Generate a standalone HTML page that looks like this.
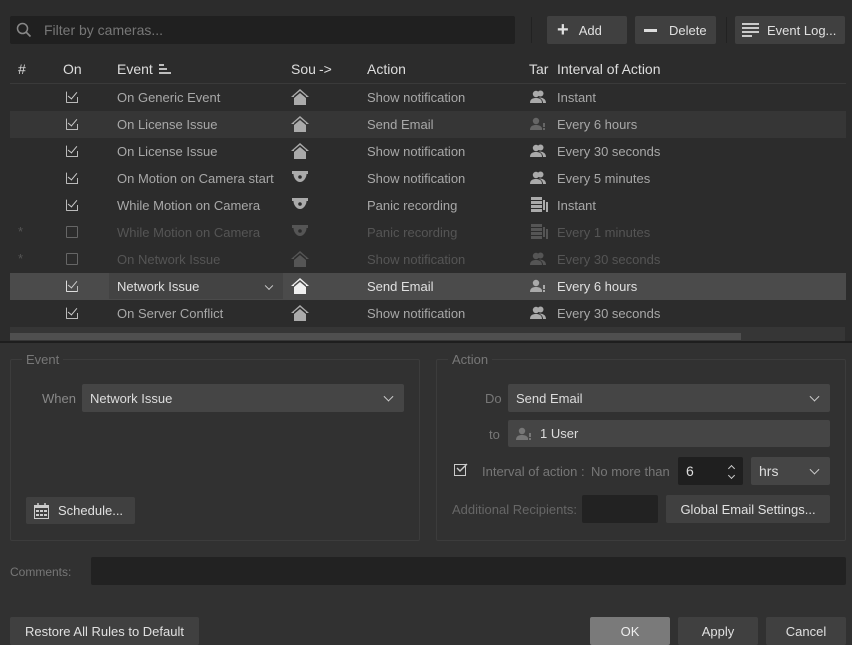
<!DOCTYPE html>
<html><head><style>
*{box-sizing:border-box;margin:0;padding:0}
body{width:852px;height:645px;background:#2c2c2c;font-family:"Liberation Sans",sans-serif;font-size:13px;color:#a8a8a8;position:relative;overflow:hidden}
.a{position:absolute}
.btn{position:absolute;background:#404040;border-radius:2px;color:#e0e0e0;display:flex;align-items:center;justify-content:center;font-size:13px}
.row{position:absolute;left:10px;width:836px;height:27px}
.row span{position:absolute;top:6px;white-space:nowrap}
.cb{position:absolute;left:56px;top:7px;width:12px;height:12px;border:1.3px solid #bbb;border-radius:1px}
.k::after{content:"";position:absolute;left:3px;top:-2px;width:4px;height:8px;border-right:1.6px solid #ccc;border-bottom:1.6px solid #ccc;transform:rotate(40deg);background:transparent}
.k{border-right-color:transparent;border-top-color:transparent}
.k::before{content:"";position:absolute;right:-1.3px;bottom:-1.3px;width:1.3px;height:6px;background:#bbb}
.dim{color:#555}
.hdr{position:absolute;top:61px;color:#ddd;font-size:14px}
.ico{position:absolute;top:5px}
.field{position:absolute;background:#454545;border-radius:2px;color:#ddd;padding-left:8px;display:flex;align-items:center}
.chev{position:absolute;right:12px;top:50%;width:7px;height:7px;border-right:1.3px solid #ccc;border-bottom:1.3px solid #ccc;transform:translateY(-70%) rotate(45deg)}
</style></head><body>
<div class="a" style="left:10px;top:16px;width:505px;height:28px;background:#202020;border-radius:2px"></div>
<svg class="a" style="left:16px;top:22px" width="16" height="16"><circle cx="6.5" cy="6.5" r="5" fill="none" stroke="#888" stroke-width="1.5"/><path d="M10 10l4.5 4.5" stroke="#888" stroke-width="1.6"/></svg>
<span class="a" style="left:44px;top:22px;color:#777;font-size:14px">Filter by cameras...</span>
<div class="a" style="left:531px;top:17px;width:1px;height:26px;background:#222"></div>
<div class="a" style="left:726px;top:17px;width:1px;height:26px;background:#222"></div>
<div class="btn" style="left:547px;top:16px;width:80px;height:28px;justify-content:flex-start;padding-left:10px"><span style="font-size:20px;font-weight:bold;margin-right:10px;line-height:1">+</span>Add</div>
<div class="btn" style="left:635px;top:16px;width:81px;height:28px;justify-content:flex-start;padding-left:9px"><span style="display:inline-block;width:13px;height:3px;background:#ddd;margin-right:12px"></span>Delete</div>
<div class="btn" style="left:735px;top:16px;width:110px;height:28px;justify-content:flex-start;padding-left:7px"><svg width="17" height="14" style="margin-right:8px"><path d="M0 1h17M0 5h17M0 9h17M0 13h10" stroke="#ddd" stroke-width="1.8"/></svg>Event Log...</div>
<span class="hdr" style="left:18px">#</span>
<span class="hdr" style="left:63px">On</span>
<span class="hdr" style="left:117px">Event</span>
<svg class="a" style="left:159px;top:64px" width="12" height="10"><path d="M0 1h5M0 5h8M0 9h12" stroke="#eee" stroke-width="1.6"/></svg>
<span class="hdr" style="left:291px">Sou</span><span class="hdr" style="left:319px">-></span>
<span class="hdr" style="left:367px">Action</span>
<span class="hdr" style="left:529px">Tar</span>
<span class="hdr" style="left:557px">Interval of Action</span>
<div class="a" style="left:10px;top:83px;width:836px;height:1px;background:#3a3a3a"></div>

<svg width="0" height="0" style="position:absolute"><defs>
<symbol id="house" viewBox="0 0 18 16"><path d="M9 0L0 8h3v-1l6-5 6 5v1h3z M3 9l6-5 6 5v7H3z" fill="currentColor"/></symbol>
<symbol id="cam" viewBox="0 0 18 16"><path d="M1 1h16v3h-1.5c0 4-3 8-6.5 8s-6.5-4-6.5-8H1z" fill="currentColor"/><circle cx="9" cy="7" r="1.8" fill="#2c2c2c"/></symbol>
<symbol id="users" viewBox="0 0 16 14"><circle cx="6" cy="4" r="3.2" fill="currentColor"/><circle cx="10.5" cy="3.5" r="3" fill="currentColor"/><path d="M0 13c0-4 3-5 6-5s6 1 6 5z M9 7.5c3 0 7 1 7 5.5h-3c0-2-1-4-4-5.5z" fill="currentColor"/></symbol>
<symbol id="user1" viewBox="0 0 16 14"><circle cx="6" cy="4" r="3.2" fill="currentColor"/><path d="M0 13c0-4 3-5 6-5s5 1 6 3v2z" fill="currentColor"/><rect x="13" y="6" width="2" height="4" fill="currentColor"/><rect x="13" y="11" width="2" height="2" fill="currentColor"/></symbol>
<symbol id="srv" viewBox="0 0 18 16"><path d="M1 0h11v3H1zM1 4h11v3H1zM1 8h11v3H1zM1 12h11v3H1zM13 3h2v10h-2zM16 5h2v10h-2z" fill="currentColor"/></symbol>
</defs></svg>

<div class="row" style="top:84px"><div class="cb k"></div><span style="left:107px">On Generic Event</span><svg class="ico" style="left:281px;color:#aaa" width="18" height="16"><use href="#house"/></svg><span style="left:357px">Show notification</span><svg class="ico" style="left:520px;top:6px;color:#aaa" width="16" height="14"><use href="#users"/></svg><span style="left:547px">Instant</span></div>
<div class="row" style="top:111px;background:#363636"><div class="cb k"></div><span style="left:107px">On License Issue</span><svg class="ico" style="left:281px;color:#aaa" width="18" height="16"><use href="#house"/></svg><span style="left:357px">Send Email</span><svg class="ico" style="left:520px;top:6px;color:#666" width="16" height="14"><use href="#user1"/></svg><span style="left:547px">Every 6 hours</span></div>
<div class="row" style="top:138px"><div class="cb k"></div><span style="left:107px">On License Issue</span><svg class="ico" style="left:281px;color:#aaa" width="18" height="16"><use href="#house"/></svg><span style="left:357px">Show notification</span><svg class="ico" style="left:520px;top:6px;color:#aaa" width="16" height="14"><use href="#users"/></svg><span style="left:547px">Every 30 seconds</span></div>
<div class="row" style="top:165px"><div class="cb k"></div><span style="left:107px">On Motion on Camera start</span><svg class="ico" style="left:281px;color:#aaa" width="18" height="16"><use href="#cam"/></svg><span style="left:357px">Show notification</span><svg class="ico" style="left:520px;top:6px;color:#aaa" width="16" height="14"><use href="#users"/></svg><span style="left:547px">Every 5 minutes</span></div>
<div class="row" style="top:192px"><div class="cb k"></div><span style="left:107px">While Motion on Camera</span><svg class="ico" style="left:281px;color:#aaa" width="18" height="16"><use href="#cam"/></svg><span style="left:357px">Panic recording</span><svg class="ico" style="left:520px;color:#aaa" width="18" height="16"><use href="#srv"/></svg><span style="left:547px">Instant</span></div>
<div class="row dim" style="top:219px"><span style="left:8px;top:5px">*</span><div class="cb" style="border-color:#666"></div><span style="left:107px">While Motion on Camera</span><svg class="ico" style="left:281px;color:#555" width="18" height="16"><use href="#cam"/></svg><span style="left:357px">Panic recording</span><svg class="ico" style="left:520px;color:#555" width="18" height="16"><use href="#srv"/></svg><span style="left:547px">Every 1 minutes</span></div>
<div class="row dim" style="top:246px"><span style="left:8px;top:5px">*</span><div class="cb" style="border-color:#666"></div><span style="left:107px">On Network Issue</span><svg class="ico" style="left:281px;color:#555" width="18" height="16"><use href="#house"/></svg><span style="left:357px">Show notification</span><svg class="ico" style="left:520px;top:6px;color:#555" width="16" height="14"><use href="#users"/></svg><span style="left:547px">Every 30 seconds</span></div>
<div class="row" style="top:273px;background:#4b4b4b;color:#e0e0e0"><div class="cb k" style="border-color:#ddd;border-right-color:transparent;border-top-color:transparent"></div><div class="a" style="left:99px;top:0;width:174px;height:26px;background:#434343"></div><span style="left:107px">Network Issue</span><div class="chev" style="left:256px;right:auto;width:6px;height:6px"></div><svg class="ico" style="left:281px;color:#eee" width="18" height="16"><use href="#house"/></svg><span style="left:357px">Send Email</span><svg class="ico" style="left:520px;top:6px;color:#aaa" width="16" height="14"><use href="#user1"/></svg><span style="left:547px">Every 6 hours</span></div>
<div class="row" style="top:300px"><div class="cb k"></div><span style="left:107px">On Server Conflict</span><svg class="ico" style="left:281px;color:#aaa" width="18" height="16"><use href="#house"/></svg><span style="left:357px">Show notification</span><svg class="ico" style="left:520px;top:6px;color:#aaa" width="16" height="14"><use href="#users"/></svg><span style="left:547px">Every 30 seconds</span></div>
<div class="a" style="left:10px;top:327px;width:835px;height:14px;background:#363636"></div>
<div class="a" style="left:10px;top:333px;width:731px;height:7px;background:#4f4f4f"></div>
<div class="a" style="left:0;top:341px;width:852px;height:2px;background:#1e1e1e"></div>

<div class="a" style="left:0;top:343px;width:852px;height:302px;background:#313131"></div>
<div class="a" style="left:10px;top:359px;width:410px;height:182px;border:1px solid #3c3c3c;border-radius:2px"></div>
<span class="a" style="left:22px;top:352px;background:#313131;padding:0 4px;color:#777">Event</span>
<span class="a" style="left:42px;top:391px;color:#888">When</span>
<div class="field" style="left:82px;top:384px;width:322px;height:28px">Network Issue<div class="chev"></div></div>
<div class="btn" style="left:26px;top:497px;width:109px;height:27px;justify-content:flex-start;padding-left:8px"><svg width="15" height="16" style="margin-right:9px"><rect x="0.5" y="2.5" width="14" height="13" fill="none" stroke="#ccc"/><rect x="0" y="2" width="15" height="3" fill="#ccc"/><path d="M4 0v3M11 0v3" stroke="#ccc" stroke-width="1.5"/><path d="M2 7h3v2H2zM6 7h3v2H6zM10 7h3v2h-3zM2 11h3v2H2zM6 11h3v2H6zM10 11h3v2h-3z" fill="#ccc"/></svg>Schedule...</div>

<div class="a" style="left:436px;top:359px;width:410px;height:182px;border:1px solid #3c3c3c;border-radius:2px"></div>
<span class="a" style="left:448px;top:352px;background:#313131;padding:0 4px;color:#777">Action</span>
<span class="a" style="left:485px;top:391px;color:#777">Do</span>
<div class="field" style="left:508px;top:384px;width:322px;height:28px">Send Email<div class="chev"></div></div>
<span class="a" style="left:489px;top:427px;color:#777">to</span>
<div class="field" style="left:508px;top:420px;width:322px;height:27px"><svg width="16" height="14" style="color:#777;margin-right:8px"><use href="#user1"/></svg>1 User</div>
<div class="a" style="left:454px;top:464px;width:12px;height:12px;border:1.3px solid #ccc"></div>
<svg class="a" style="left:456px;top:463px" width="12" height="10"><path d="M1 5l3 3 7-7" fill="none" stroke="#ccc" stroke-width="1.4"/></svg>
<span class="a" style="left:482px;top:464px;color:#777">Interval of action :</span>
<span class="a" style="left:591px;top:464px;color:#777">No more than</span>
<div class="a" style="left:678px;top:457px;width:65px;height:28px;background:#1f1f1f;border-radius:2px;color:#ddd;padding:6px 0 0 8px;font-size:14px">6</div>
<div class="chev" style="left:729px;right:auto;top:466px;width:5px;height:5px;transform:rotate(-135deg)"></div>
<div class="chev" style="left:729px;right:auto;top:473px;width:5px;height:5px;transform:rotate(45deg)"></div>
<div class="field" style="left:751px;top:457px;width:79px;height:28px;font-size:14px">hrs<div class="chev"></div></div>
<span class="a" style="left:452px;top:502px;color:#666">Additional Recipients:</span>
<div class="a" style="left:582px;top:495px;width:76px;height:28px;background:#222;border-radius:2px"></div>
<div class="btn" style="left:666px;top:495px;width:164px;height:28px">Global Email Settings...</div>

<span class="a" style="left:10px;top:565px;color:#777;font-size:12px">Comments:</span>
<div class="a" style="left:91px;top:557px;width:755px;height:28px;background:#222;border-radius:2px"></div>

<div class="btn" style="left:10px;top:617px;width:189px;height:28px">Restore All Rules to Default</div>
<div class="btn" style="left:590px;top:617px;width:80px;height:28px;background:#7a7a7a;color:#eee">OK</div>
<div class="btn" style="left:678px;top:617px;width:80px;height:28px">Apply</div>
<div class="btn" style="left:766px;top:617px;width:80px;height:28px">Cancel</div>
</body></html>
